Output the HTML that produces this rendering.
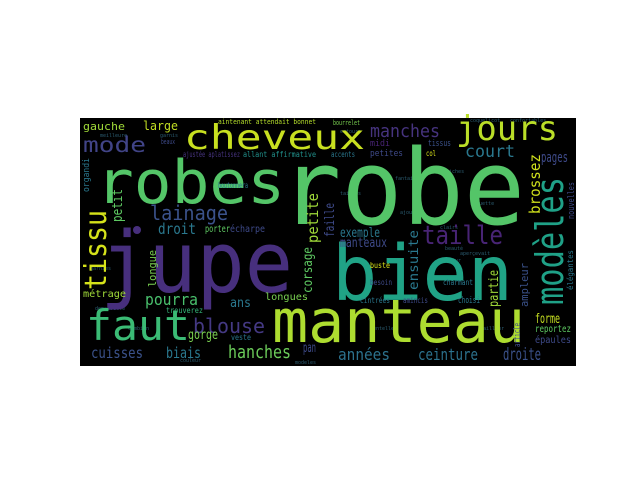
<!DOCTYPE html>
<html><head><meta charset="utf-8"><style>
html,body{margin:0;padding:0;background:#fff;width:640px;height:480px;overflow:hidden}
svg{display:block}
text{font-family:"DejaVu Sans Mono","Liberation Mono",monospace}
</style></head><body>
<svg width="640" height="480" viewBox="0 0 640 480" xmlns="http://www.w3.org/2000/svg">
<rect x="80" y="118" width="496" height="248" fill="#000"/>
<g font-size="5" fill="#2a5a6e">
<text x="100" y="137">meilleure</text><text x="160" y="137">garnis</text><text x="340" y="133">entoure</text>
<text x="470" y="122">coquelicot</text><text x="510" y="122">confortables</text><text x="440" y="173">fraiches</text>
<text x="395" y="180">fantaisie</text><text x="340" y="195">tailles</text><text x="470" y="205">coquette</text>
<text x="460" y="255">aperçevait</text><text x="440" y="262">couleur</text><text x="90" y="270">garnies</text>
<text x="95" y="310">demoiselle</text><text x="400" y="214">ajouter</text><text x="440" y="229">clairs</text>
<text x="445" y="250">beauté</text><text x="128" y="330">combien</text><text x="295" y="364">modeles</text>
<text x="480" y="330">tailleur</text><text x="180" y="362">couleur</text><text x="370" y="330">dentelle</text>
</g>
<text x="280" y="224" font-size="104" textLength="245" lengthAdjust="spacingAndGlyphs" fill="#54c568">robe</text>
<text x="96" y="203" font-size="60" textLength="189" lengthAdjust="spacingAndGlyphs" fill="#54c568">robes</text>
<text x="100" y="292" font-size="85" textLength="193" lengthAdjust="spacingAndGlyphs" fill="#472f7d">jupe</text>
<text x="332" y="300" font-size="77" textLength="181" lengthAdjust="spacingAndGlyphs" fill="#20a386">bien</text>
<text x="272" y="342" font-size="60" textLength="253" lengthAdjust="spacingAndGlyphs" fill="#addc30">manteau</text>
<text x="86" y="340" font-size="42" textLength="104" lengthAdjust="spacingAndGlyphs" fill="#3bbb75">faut</text>
<text x="184" y="149" font-size="34" textLength="181" lengthAdjust="spacingAndGlyphs" fill="#c8e020">cheveux</text>
<text x="456" y="140" font-size="34" textLength="102" lengthAdjust="spacingAndGlyphs" fill="#bade28">jours</text>
<text x="422" y="244" font-size="26" textLength="81" lengthAdjust="spacingAndGlyphs" fill="#482475">taille</text>
<text x="150" y="220" font-size="20" textLength="78" lengthAdjust="spacingAndGlyphs" fill="#3b528b">lainage</text>
<text x="83" y="152" font-size="21" textLength="63" lengthAdjust="spacingAndGlyphs" fill="#414487">mode</text>
<text x="83" y="130" font-size="11" textLength="42" lengthAdjust="spacingAndGlyphs" fill="#a0da39">gauche</text>
<text x="143" y="130" font-size="12" textLength="35" lengthAdjust="spacingAndGlyphs" fill="#c2df23">large</text>
<text x="370" y="137" font-size="18" textLength="70" lengthAdjust="spacingAndGlyphs" fill="#46337e">manches</text>
<text x="370" y="146" font-size="9" textLength="20" lengthAdjust="spacingAndGlyphs" fill="#482475">midi</text>
<text x="428" y="146" font-size="9" textLength="23" lengthAdjust="spacingAndGlyphs" fill="#3b528b">tissus</text>
<text x="370" y="156" font-size="9" textLength="33" lengthAdjust="spacingAndGlyphs" fill="#3e4a89">petites</text>
<text x="465" y="157" font-size="17" textLength="50" lengthAdjust="spacingAndGlyphs" fill="#2a788e">court</text>
<text x="426" y="156" font-size="8" textLength="10" lengthAdjust="spacingAndGlyphs" fill="#d8e219">col</text>
<text x="331" y="157" font-size="8" textLength="24" lengthAdjust="spacingAndGlyphs" fill="#2a788e">accents</text>
<text x="541" y="162" font-size="14" textLength="27" lengthAdjust="spacingAndGlyphs" fill="#3e4a89">pages</text>
<text x="333" y="125" font-size="7" textLength="27" lengthAdjust="spacingAndGlyphs" fill="#7ad151">bourrelet</text>
<text x="218" y="124" font-size="7" textLength="98" lengthAdjust="spacingAndGlyphs" fill="#b5de2b">aintenant attendait bonnet</text>
<text x="161" y="144" font-size="7" textLength="14" lengthAdjust="spacingAndGlyphs" fill="#3e4a89">beaux</text>
<text x="183" y="157" font-size="8" textLength="57" lengthAdjust="spacingAndGlyphs" fill="#46337e">ajustée aplatissez</text>
<text x="243" y="157" font-size="8" textLength="73" lengthAdjust="spacingAndGlyphs" fill="#21918c">allant affirmative</text>
<text x="218" y="188" font-size="8" textLength="30" lengthAdjust="spacingAndGlyphs" fill="#2a788e">boutonnera</text>
<text x="158" y="234" font-size="15" textLength="38" lengthAdjust="spacingAndGlyphs" fill="#2a788e">droit</text>
<text x="205" y="232" font-size="10" textLength="25" lengthAdjust="spacingAndGlyphs" fill="#5ec962">porter</text>
<text x="230" y="232" font-size="10" textLength="35" lengthAdjust="spacingAndGlyphs" fill="#3e4a89">écharpe</text>
<text x="340" y="237" font-size="13" textLength="40" lengthAdjust="spacingAndGlyphs" fill="#2a788e">exemple</text>
<text x="340" y="247" font-size="13" textLength="47" lengthAdjust="spacingAndGlyphs" fill="#3e4a89">manteaux</text>
<text x="145" y="305" font-size="16" textLength="53" lengthAdjust="spacingAndGlyphs" fill="#4ac16d">pourra</text>
<text x="83" y="297" font-size="10" textLength="43" lengthAdjust="spacingAndGlyphs" fill="#a0da39">métrage</text>
<text x="265" y="300" font-size="10" textLength="43" lengthAdjust="spacingAndGlyphs" fill="#7ad151">longues</text>
<text x="230" y="307" font-size="13" textLength="21" lengthAdjust="spacingAndGlyphs" fill="#2a788e">ans</text>
<text x="166" y="313" font-size="8" textLength="37" lengthAdjust="spacingAndGlyphs" fill="#35b779">trouverez</text>
<text x="193" y="333" font-size="20" textLength="72" lengthAdjust="spacingAndGlyphs" fill="#443983">blouse</text>
<text x="188" y="339" font-size="13" textLength="30" lengthAdjust="spacingAndGlyphs" fill="#7ad151">gorge</text>
<text x="231" y="340" font-size="8" textLength="20" lengthAdjust="spacingAndGlyphs" fill="#2a788e">veste</text>
<text x="91" y="358" font-size="15" textLength="52" lengthAdjust="spacingAndGlyphs" fill="#3b528b">cuisses</text>
<text x="166" y="358" font-size="15" textLength="35" lengthAdjust="spacingAndGlyphs" fill="#2a788e">biais</text>
<text x="228" y="358" font-size="18" textLength="63" lengthAdjust="spacingAndGlyphs" fill="#6ccd5a">hanches</text>
<text x="303" y="352" font-size="13" textLength="13" lengthAdjust="spacingAndGlyphs" fill="#3e4a89">pan</text>
<text x="370" y="268" font-size="8" textLength="20" lengthAdjust="spacingAndGlyphs" fill="#d8e219">buste</text>
<text x="370" y="285" font-size="8" textLength="22" lengthAdjust="spacingAndGlyphs" fill="#3e4a89">besoin</text>
<text x="443" y="285" font-size="8" textLength="30" lengthAdjust="spacingAndGlyphs" fill="#2a788e">charmant</text>
<text x="360" y="303" font-size="8" textLength="30" lengthAdjust="spacingAndGlyphs" fill="#2a788e">cintrées</text>
<text x="403" y="303" font-size="8" textLength="25" lengthAdjust="spacingAndGlyphs" fill="#3e4a89">amincis</text>
<text x="458" y="303" font-size="9" textLength="22" lengthAdjust="spacingAndGlyphs" fill="#2a788e">choisi</text>
<text x="535" y="323" font-size="13" textLength="25" lengthAdjust="spacingAndGlyphs" fill="#c6e021">forme</text>
<text x="535" y="332" font-size="10" textLength="36" lengthAdjust="spacingAndGlyphs" fill="#5ec962">reportez</text>
<text x="535" y="343" font-size="10" textLength="36" lengthAdjust="spacingAndGlyphs" fill="#3e4a89">épaules</text>
<text x="338" y="360" font-size="16" textLength="52" lengthAdjust="spacingAndGlyphs" fill="#2c728e">années</text>
<text x="418" y="360" font-size="16" textLength="60" lengthAdjust="spacingAndGlyphs" fill="#2c728e">ceinture</text>
<text x="503" y="360" font-size="17" textLength="38" lengthAdjust="spacingAndGlyphs" fill="#3b528b">droite</text>

<text transform="translate(106,290) rotate(-90)" font-size="30" textLength="80" lengthAdjust="spacingAndGlyphs" fill="#d5e21a">tissu</text>
<text transform="translate(122,222) rotate(-90)" font-size="14" textLength="33" lengthAdjust="spacingAndGlyphs" fill="#5ec962">petit</text>
<text transform="translate(89,192) rotate(-90)" font-size="9" textLength="34" lengthAdjust="spacingAndGlyphs" fill="#2a788e">organdi</text>
<text transform="translate(156,287) rotate(-90)" font-size="11" textLength="37" lengthAdjust="spacingAndGlyphs" fill="#7ad151">longue</text>
<text transform="translate(318,243) rotate(-90)" font-size="15" textLength="50" lengthAdjust="spacingAndGlyphs" fill="#a0da39">petite</text>
<text transform="translate(312,293) rotate(-90)" font-size="13" textLength="46" lengthAdjust="spacingAndGlyphs" fill="#5ec962">corsage</text>
<text transform="translate(334,237) rotate(-90)" font-size="13" textLength="34" lengthAdjust="spacingAndGlyphs" fill="#3e4a89">faille</text>
<text transform="translate(418,290) rotate(-90)" font-size="13" textLength="60" lengthAdjust="spacingAndGlyphs" fill="#2a788e">ensuite</text>
<text transform="translate(540,214) rotate(-90)" font-size="15" textLength="60" lengthAdjust="spacingAndGlyphs" fill="#d0e11c">brossez</text>
<text transform="translate(563,305) rotate(-90)" font-size="38" textLength="128" lengthAdjust="spacingAndGlyphs" fill="#1fa187">modèles</text>
<text transform="translate(574,219) rotate(-90)" font-size="9" textLength="37" lengthAdjust="spacingAndGlyphs" fill="#3e4a89">nouvelles</text>
<text transform="translate(573,290) rotate(-90)" font-size="8" textLength="40" lengthAdjust="spacingAndGlyphs" fill="#2a788e">élégantes</text>
<text transform="translate(528,307) rotate(-90)" font-size="11" textLength="44" lengthAdjust="spacingAndGlyphs" fill="#3b528b">ampleur</text>
<text transform="translate(498,307) rotate(-90)" font-size="13" textLength="37" lengthAdjust="spacingAndGlyphs" fill="#a0da39">partie</text>
<text transform="translate(520,347) rotate(-90)" font-size="9" textLength="24" lengthAdjust="spacingAndGlyphs" fill="#3e4a89">article</text>
<circle cx="137" cy="230" r="4" fill="#472f7d"/>
</svg>
</body></html>
